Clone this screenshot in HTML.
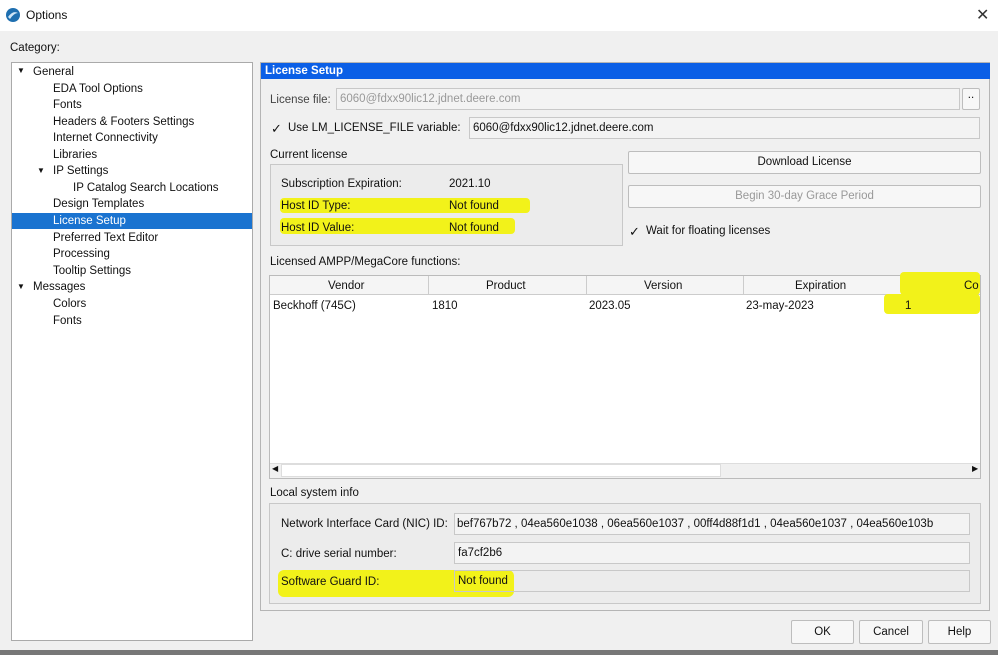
<!DOCTYPE html>
<html><head><style>
*{margin:0;padding:0;box-sizing:border-box}
body{width:998px;height:655px;background:#f0f0f0;font-family:"Liberation Sans",sans-serif;font-size:11.5px;color:#111;position:relative;overflow:hidden}
.a{position:absolute;white-space:nowrap}
.box{position:absolute;border:1px solid #c8c8c8;background:#f3f3f3}
.btn{position:absolute;border:1px solid #bdbdbd;background:#f7f7f7;border-radius:2px;text-align:center}
.hl{position:absolute;background:#f2f21a}
.t{position:absolute;white-space:nowrap}
</style></head><body>
<div class="a" style="left:0;top:0;width:998px;height:31px;background:#fff"></div>
<svg class="a" style="left:5px;top:7px" width="16" height="16"><circle cx="8" cy="8" r="7" fill="#1e6fb0"/><path d="M3 10 Q8 3 13 6 Q9 6 5 12Z" fill="#cfe6f7"/></svg>
<div class="a" style="left:26px;top:8px;font-size:12px">Options</div>
<div class="a" style="left:976px;top:5px;font-size:16px;color:#333">✕</div>
<div class="a" style="left:10px;top:42px">Category:</div>
<div class="a" style="left:11px;top:62px;width:242px;height:579px;background:#fff;border:1px solid #aaa"></div>
<div class="a" style="left:12px;top:213px;width:240px;height:16px;background:#1a73d0"></div>
<div class="t" style="left:17px;top:66px;font-size:8px">▼</div>
<div class="t" style="left:33px;top:66px">General</div>
<div class="t" style="left:53px;top:83px">EDA Tool Options</div>
<div class="t" style="left:53px;top:99px">Fonts</div>
<div class="t" style="left:53px;top:116px">Headers &amp; Footers Settings</div>
<div class="t" style="left:53px;top:132px">Internet Connectivity</div>
<div class="t" style="left:53px;top:149px">Libraries</div>
<div class="t" style="left:37px;top:166px;font-size:8px">▼</div>
<div class="t" style="left:53px;top:165px">IP Settings</div>
<div class="t" style="left:73px;top:182px">IP Catalog Search Locations</div>
<div class="t" style="left:53px;top:198px">Design Templates</div>
<div class="t" style="left:53px;top:215px;color:#fff">License Setup</div>
<div class="t" style="left:53px;top:232px">Preferred Text Editor</div>
<div class="t" style="left:53px;top:248px">Processing</div>
<div class="t" style="left:53px;top:265px">Tooltip Settings</div>
<div class="t" style="left:17px;top:282px;font-size:8px">▼</div>
<div class="t" style="left:33px;top:281px">Messages</div>
<div class="t" style="left:53px;top:298px">Colors</div>
<div class="t" style="left:53px;top:315px">Fonts</div>

<div class="a" style="left:260px;top:62px;width:730px;height:549px;border:1px solid #b5b5b5;background:#f0f0f0"></div>
<div class="a" style="left:261px;top:63px;width:729px;height:16px;background:#0b5fe6;color:#fff;font-weight:bold;padding-left:4px;line-height:16px">License Setup</div>
<div class="t" style="left:270px;top:94px;color:#444">License file:</div>
<div class="box" style="left:336px;top:88px;width:624px;height:22px;color:#999;padding:4px 3px">6060@fdxx90lic12.jdnet.deere.com</div>
<div class="btn" style="left:962px;top:88px;width:18px;height:22px">..</div>
<div class="t" style="left:271px;top:121px;font-size:13px">✓</div>
<div class="t" style="left:288px;top:122px">Use LM_LICENSE_FILE variable:</div>
<div class="box" style="left:469px;top:117px;width:511px;height:22px;padding:4px 3px">6060@fdxx90lic12.jdnet.deere.com</div>
<div class="t" style="left:270px;top:149px">Current license</div>
<div class="box" style="left:270px;top:164px;width:353px;height:82px;background:#ececec"></div>
<div class="hl" style="left:280px;top:198px;width:250px;height:15px;border-radius:4px"></div>
<div class="hl" style="left:280px;top:218px;width:235px;height:16px;border-radius:4px"></div>
<div class="t" style="left:281px;top:178px">Subscription Expiration:</div><div class="t" style="left:449px;top:178px">2021.10</div>
<div class="t" style="left:281px;top:200px">Host ID Type:</div><div class="t" style="left:449px;top:200px">Not found</div>
<div class="t" style="left:281px;top:222px">Host ID Value:</div><div class="t" style="left:449px;top:222px">Not found</div>
<div class="btn" style="left:628px;top:151px;width:353px;height:23px;line-height:21px">Download License</div>
<div class="btn" style="left:628px;top:185px;width:353px;height:23px;line-height:21px;color:#999">Begin 30-day Grace Period</div>
<div class="t" style="left:629px;top:224px;font-size:13px">✓</div>
<div class="t" style="left:646px;top:225px">Wait for floating licenses</div>
<div class="t" style="left:270px;top:256px">Licensed AMPP/MegaCore functions:</div>
<div class="a" style="left:269px;top:275px;width:712px;height:204px;background:#fff;border:1px solid #bbb"></div>
<div class="a" style="left:270px;top:276px;width:710px;height:19px;background:#f5f5f5;border-bottom:1px solid #ccc"></div>
<div class="hl" style="left:900px;top:272px;width:80px;height:23px;border-radius:4px"></div>
<div class="hl" style="left:884px;top:294px;width:96px;height:20px;border-radius:4px"></div>
<div class="a" style="left:428px;top:276px;width:1px;height:19px;background:#ccc"></div>
<div class="a" style="left:586px;top:276px;width:1px;height:19px;background:#ccc"></div>
<div class="a" style="left:743px;top:276px;width:1px;height:19px;background:#ccc"></div>
<div class="t" style="left:328px;top:280px">Vendor</div>
<div class="t" style="left:486px;top:280px">Product</div>
<div class="t" style="left:644px;top:280px">Version</div>
<div class="t" style="left:795px;top:280px">Expiration</div>
<div class="t" style="left:964px;top:280px">Co</div>
<div class="t" style="left:273px;top:300px">Beckhoff (745C)</div>
<div class="t" style="left:432px;top:300px">1810</div>
<div class="t" style="left:589px;top:300px">2023.05</div>
<div class="t" style="left:746px;top:300px">23-may-2023</div>
<div class="t" style="left:905px;top:300px">1</div>
<div class="a" style="left:270px;top:463px;width:710px;height:15px;background:#f0f0f0;border-top:1px solid #ddd"></div>
<div class="a" style="left:281px;top:464px;width:440px;height:13px;background:#fff;border:1px solid #ddd"></div>
<div class="t" style="left:272px;top:464px;font-size:8px">◀</div>
<div class="t" style="left:972px;top:464px;font-size:8px">▶</div>
<div class="t" style="left:270px;top:487px">Local system info</div>
<div class="box" style="left:269px;top:503px;width:712px;height:101px;background:#ececec"></div>
<div class="hl" style="left:278px;top:570px;width:236px;height:27px;border-radius:6px"></div>
<div class="t" style="left:281px;top:518px">Network Interface Card (NIC) ID:</div>
<div class="box" style="left:454px;top:513px;width:516px;height:22px;padding:4px 2px">bef767b72 , 04ea560e1038 , 06ea560e1037 , 00ff4d88f1d1 , 04ea560e1037 , 04ea560e103b</div>
<div class="t" style="left:281px;top:548px">C: drive serial number:</div>
<div class="box" style="left:454px;top:542px;width:516px;height:22px;padding:4px 3px">fa7cf2b6</div>
<div class="t" style="left:281px;top:576px">Software Guard ID:</div>
<div class="box" style="left:454px;top:570px;width:516px;height:22px;padding:4px 3px;background:transparent">Not found</div>
<div class="btn" style="left:791px;top:620px;width:63px;height:24px;line-height:22px">OK</div>
<div class="btn" style="left:859px;top:620px;width:64px;height:24px;line-height:22px">Cancel</div>
<div class="btn" style="left:928px;top:620px;width:63px;height:24px;line-height:22px">Help</div>
<div class="a" style="left:0;top:650px;width:998px;height:5px;background:#777"></div>
</body></html>
